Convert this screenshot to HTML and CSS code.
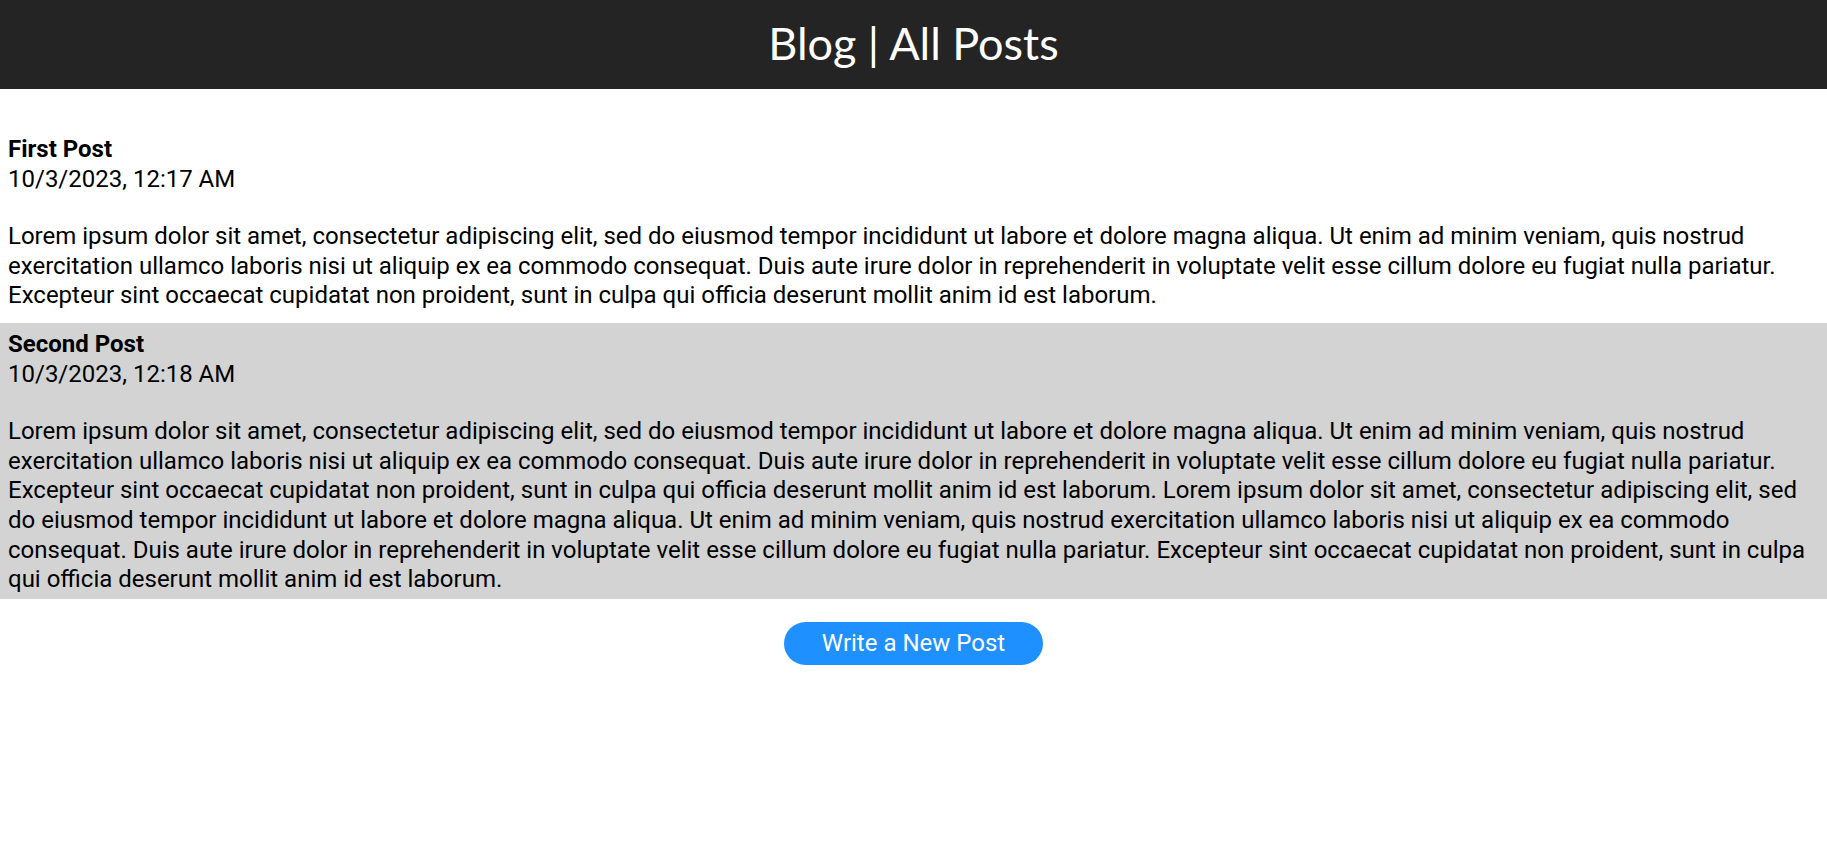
FILE: index.html
```html
<!DOCTYPE html>
<html lang="en">
<head>
<meta charset="utf-8">
<title>Blog | All Posts</title>
<link rel="stylesheet" href="styles.css">
</head>
<body>
<header class="site-header">
  <h1 class="site-title">Blog | All Posts</h1>
</header>
<main class="posts">
  <article class="post">
    <div class="post-title">First Post</div>
    <div class="post-date">10/3/2023, 12:17 AM</div>
    <p class="post-body">Lorem ipsum dolor sit amet, consectetur adipiscing elit, sed do eiusmod tempor incididunt ut labore et dolore magna aliqua. Ut enim ad minim veniam, quis nostrud exercitation ullamco laboris nisi ut aliquip ex ea commodo consequat. Duis aute irure dolor in reprehenderit in voluptate velit esse cillum dolore eu fugiat nulla pariatur. Excepteur sint occaecat cupidatat non proident, sunt in culpa qui officia deserunt mollit anim id est laborum.</p>
  </article>
  <article class="post post-alt">
    <div class="post-title">Second Post</div>
    <div class="post-date">10/3/2023, 12:18 AM</div>
    <p class="post-body">Lorem ipsum dolor sit amet, consectetur adipiscing elit, sed do eiusmod tempor incididunt ut labore et dolore magna aliqua. Ut enim ad minim veniam, quis nostrud exercitation ullamco laboris nisi ut aliquip ex ea commodo consequat. Duis aute irure dolor in reprehenderit in voluptate velit esse cillum dolore eu fugiat nulla pariatur. Excepteur sint occaecat cupidatat non proident, sunt in culpa qui officia deserunt mollit anim id est laborum. Lorem ipsum dolor sit amet, consectetur adipiscing elit, sed do eiusmod tempor incididunt ut labore et dolore magna aliqua. Ut enim ad minim veniam, quis nostrud exercitation ullamco laboris nisi ut aliquip ex ea commodo consequat. Duis aute irure dolor in reprehenderit in voluptate velit esse cillum dolore eu fugiat nulla pariatur. Excepteur sint occaecat cupidatat non proident, sunt in culpa qui officia deserunt mollit anim id est laborum.</p>
  </article>
  <div class="actions">
    <button class="new-post-btn" type="button">Write a New Post</button>
  </div>
</main>
</body>
</html>
```
FILE: styles.css
```css
html, body {
  margin: 0;
  padding: 0;
  background: #ffffff;
}
body {
  font-family: Roboto, "Liberation Sans", sans-serif;
  font-size: 24px;
  line-height: 29.6px;
  color: #000000;
}
.site-header {
  background: #242424;
  height: 89px;
  display: flex;
  align-items: center;
  justify-content: center;
}
.site-title {
  margin: 0;
  font-family: Lato, "Noto Sans", sans-serif;
  font-weight: 400;
  font-size: 45px;
  line-height: 1;
  color: #ffffff;
  padding-bottom: 2px;
}
.posts {
  padding-top: 39px;
  display: flex;
  flex-direction: column;
  gap: 8px;
}
.post {
  padding: 7px 8px 4px;
}
.post-alt {
  background: #d3d3d3;
}
.post-title {
  font-weight: 700;
}
.post-body {
  margin: 28px 0 0 0;
}
.actions {
  display: flex;
  justify-content: center;
  padding-top: 15px;
}
.new-post-btn {
  width: 259px;
  height: 43px;
  border: none;
  border-radius: 22px;
  background: #1e90ff;
  color: #ffffff;
  font-family: Roboto, "Liberation Sans", sans-serif;
  font-size: 24px;
  cursor: pointer;
}
```
